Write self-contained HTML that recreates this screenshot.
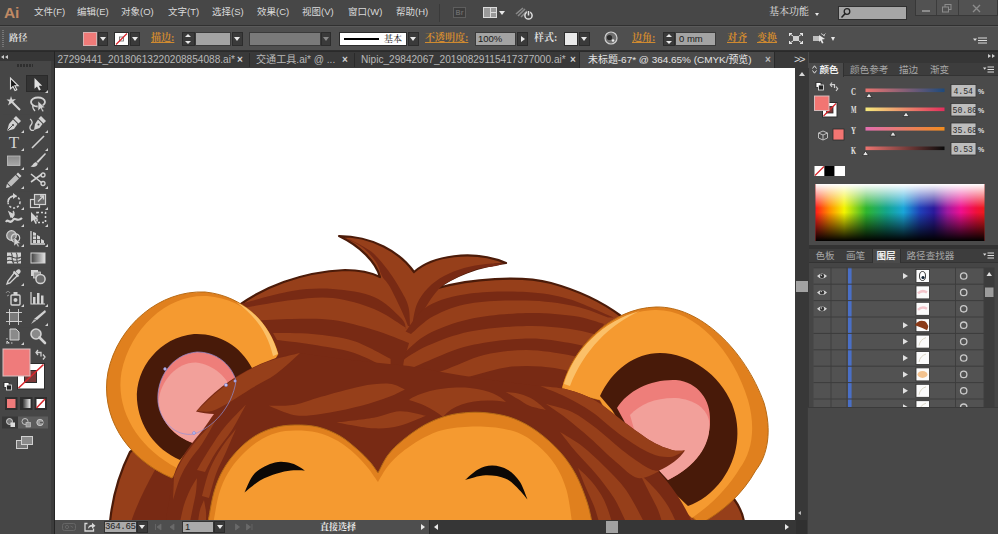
<!DOCTYPE html>
<html lang="zh-CN">
<head>
<meta charset="utf-8">
<title>Ai</title>
<style>
*{box-sizing:border-box;margin:0;padding:0}
html,body{width:998px;height:534px;overflow:hidden;background:#4a4a4a}
body{position:relative;font-family:"Liberation Sans","Noto Sans CJK SC",sans-serif;font-size:10px;color:#e0e0e0}
.abs,.t,.b{position:absolute}
.t{white-space:nowrap;line-height:12px;height:12px}
.m{font-size:9.5px;color:#dadada}
.tb{font-size:10.1px;color:#b8b8b8}
.pt{font-size:9.6px;color:#a6a6a6}
.tx{font-size:10px;color:#d0d0d0;font-weight:700}
.serif{font-family:"Liberation Serif","Noto Serif CJK SC",serif;font-weight:700}
.or{color:#cf8a30;text-decoration:underline}
#menubar{left:0;top:0;width:998px;height:26px;background:#474747;border-bottom:1px solid #303030}
#ctrlbar{left:0;top:26px;width:998px;height:25px;background:#4f4f4f;border-top:1px solid #5a5a5a;border-bottom:1px solid #2e2e2e}
#tabbar{left:55px;top:51px;width:753px;height:17px;background:#393939}
#toolbox{left:0;top:51px;width:54px;height:483px;background:#464646;border-right:3px solid #3c3c3c}
#tbgap{left:53.5px;top:51px;width:1.5px;height:483px;background:#242424}
#canvas{left:55px;top:68px;width:740px;height:452px;background:#fff;overflow:hidden}
#vscroll{left:795px;top:68px;width:14px;height:452px;background:#383838}
#status{left:55px;top:520px;width:754px;height:14px;background:#4e4e4e}
#right{left:809px;top:51px;width:189px;height:483px;background:#4a4a4a}
.dd{background:#3a3a3a;border:1px solid #2c2c2c}
.inp{background:#a3a3a3;border:1px solid #3a3a3a;color:#1a1a1a}
.tri-d{width:0;height:0;border-left:3px solid transparent;border-right:3px solid transparent;border-top:4px solid #e8e8e8}
.tri-u{width:0;height:0;border-left:3px solid transparent;border-right:3px solid transparent;border-bottom:4px solid #e8e8e8}
.tri-r{width:0;height:0;border-top:3px solid transparent;border-bottom:3px solid transparent;border-left:4px solid #e8e8e8}
.tri-l{width:0;height:0;border-top:3px solid transparent;border-bottom:3px solid transparent;border-right:4px solid #e8e8e8}
</style>
</head>
<body>
<!-- ===== MENU BAR ===== -->
<div id="menubar" class="abs">
  <div class="t" id="ai" style="left:4px;top:3.5px;font-size:15.5px;line-height:18px;height:18px;font-weight:700;color:#c08a64;letter-spacing:-0.3px">Ai</div>
  <div class="t m" style="left:34px;top:6px">文件(F)</div>
  <div class="t m" style="left:77px;top:6px">编辑(E)</div>
  <div class="t m" style="left:121px;top:6px">对象(O)</div>
  <div class="t m" style="left:168px;top:6px">文字(T)</div>
  <div class="t m" style="left:212px;top:6px">选择(S)</div>
  <div class="t m" style="left:257px;top:6px">效果(C)</div>
  <div class="t m" style="left:302px;top:6px">视图(V)</div>
  <div class="t m" style="left:348px;top:6px">窗口(W)</div>
  <div class="t m" style="left:396px;top:6px">帮助(H)</div>
  <div class="b" style="left:439px;top:4px;width:1px;height:18px;background:#3a3a3a"></div>
  <div class="b" style="left:453px;top:7px;width:13px;height:11px;background:#3c3c3c;border:1px solid #5e5e5e;color:#6a6a6a;font-size:7px;line-height:9px;text-align:center;font-weight:700">Br</div>
  <svg class="abs" style="left:483px;top:7px" width="14" height="11" viewBox="0 0 14 11"><rect x="0" y="0" width="14" height="11" fill="#dcdcdc"/><rect x="1" y="1" width="6" height="9" fill="#9a9a9a"/><rect x="8" y="1" width="5" height="4" fill="#9a9a9a"/><rect x="8" y="6" width="5" height="4" fill="#9a9a9a"/></svg>
  <div class="b tri-d" style="left:499px;top:11px"></div>
  <svg class="abs" style="left:515px;top:6px" width="20" height="15" viewBox="0 0 20 15"><path d="M1 8 L8 2 M3 10 L10 3 M6 11 L12 5" stroke="#8a8a8a" stroke-width="1.6" fill="none"/><circle cx="13.5" cy="9.5" r="3.6" fill="none" stroke="#e0e0e0" stroke-width="1.5"/><path d="M13.5 4.5 V9" stroke="#474747" stroke-width="3.2"/><path d="M13.5 5 V9.5" stroke="#e0e0e0" stroke-width="1.5"/></svg>
  <div class="t serif" style="left:769px;top:6px;font-weight:400;color:#e6e6e6">基本功能</div>
  <div class="b tri-d" style="left:815px;top:13px;border-left-width:2.5px;border-right-width:2.5px;border-top-width:3px"></div>
  <div class="b" style="left:838px;top:6px;width:69px;height:14px;background:#a6a6a6;border:1px solid #303030"></div>
  <svg class="abs" style="left:840px;top:7px" width="12" height="12" viewBox="0 0 12 12"><circle cx="7" cy="4.5" r="2.8" fill="none" stroke="#222" stroke-width="1.3"/><path d="M5 6.8 L1.5 10.5" stroke="#222" stroke-width="1.6"/></svg>
  <div class="b" style="left:915px;top:0;width:83px;height:16px;background:#525252;border:1px solid #383838;border-top:none"></div>
  <div class="b" style="left:936px;top:0;width:1px;height:15px;background:#3c3c3c"></div>
  <div class="b" style="left:958px;top:0;width:1px;height:15px;background:#3c3c3c"></div>
  <div class="b" style="left:922px;top:10px;width:8px;height:2px;background:#8c8c8c"></div>
  <svg class="abs" style="left:942px;top:4px" width="10" height="9" viewBox="0 0 10 9"><rect x="3" y="0.5" width="6" height="5" fill="none" stroke="#8c8c8c"/><rect x="0.5" y="3" width="6" height="5" fill="#525252" stroke="#8c8c8c"/></svg>
  <svg class="abs" style="left:972px;top:4px" width="9" height="9" viewBox="0 0 9 9"><path d="M1 1 L8 8 M8 1 L1 8" stroke="#8c8c8c" stroke-width="1.4"/></svg>
</div>
<!-- ===== CONTROL BAR ===== -->
<div id="ctrlbar" class="abs"></div>
<div class="b" style="left:2px;top:30px;width:2px;height:17px;background:repeating-linear-gradient(#777 0 1px,transparent 1px 2px)"></div>
<div class="t serif" style="left:9px;top:32px;color:#dcdcdc;font-size:9.2px">路径</div>
<div class="b" style="left:83px;top:32px;width:14px;height:14px;background:#f07a78;border:1px solid #d8b0b0"></div>
<div class="b dd" style="left:98px;top:32px;width:10px;height:14px"></div><div class="b tri-d" style="left:100px;top:37px"></div>
<svg class="abs" style="left:114px;top:32px" width="15" height="14" viewBox="0 0 15 14"><rect x="0.5" y="0.5" width="14" height="13" fill="#fff" stroke="#2c2c2c"/><rect x="5.5" y="5" width="4" height="4" fill="none" stroke="#666" stroke-width="0.8"/><path d="M2 12.5 L13 1.5" stroke="#d8262c" stroke-width="1.3"/></svg>
<div class="b dd" style="left:130px;top:32px;width:10px;height:14px"></div><div class="b tri-d" style="left:132px;top:37px"></div>
<div class="t serif or" style="left:151px;top:32px">描边:</div>
<div class="b dd" style="left:182px;top:32px;width:13px;height:14px"></div><div class="b tri-u" style="left:185px;top:34px;border-bottom-width:3px"></div><div class="b tri-d" style="left:185px;top:41px;border-top-width:3px"></div>
<div class="b inp" style="left:195px;top:32px;width:36px;height:14px"></div>
<div class="b dd" style="left:232px;top:32px;width:11px;height:14px"></div><div class="b tri-d" style="left:234px;top:37px"></div>
<div class="b" style="left:249px;top:32px;width:72px;height:14px;background:#7a7a7a;border:1px solid #3a3a3a"></div>
<div class="b dd" style="left:321px;top:32px;width:10px;height:14px"></div><div class="b tri-d" style="left:323px;top:37px;border-top-color:#888"></div>
<div class="b" style="left:339px;top:32px;width:68px;height:14px;background:#fff;border:1px solid #2c2c2c"></div>
<div class="b" style="left:344px;top:38px;width:35px;height:2px;background:#000"></div>
<div class="t serif" style="left:384px;top:33px;color:#111;font-size:9px;font-weight:400">基本</div>
<div class="b dd" style="left:408px;top:32px;width:11px;height:14px"></div><div class="b tri-d" style="left:410px;top:37px"></div>
<div class="t serif or" style="left:425px;top:32px">不透明度:</div>
<div class="b inp" style="left:475px;top:32px;width:41px;height:14px"></div>
<div class="t" style="left:478px;top:33px;color:#1a1a1a;font-size:9.5px">100%</div>
<div class="b dd" style="left:517px;top:32px;width:11px;height:14px"></div><div class="b tri-r" style="left:521px;top:36px"></div>
<div class="t serif" style="left:534px;top:32px;color:#dcdcdc">样式:</div>
<div class="b" style="left:564px;top:32px;width:14px;height:14px;background:#e9e9e9;border:1px solid #2c2c2c"></div>
<div class="b dd" style="left:579px;top:32px;width:11px;height:14px"></div><div class="b tri-d" style="left:581px;top:37px"></div>
<svg class="abs" style="left:604px;top:31px" width="14" height="14" viewBox="0 0 14 14"><circle cx="7" cy="7" r="6" fill="#6e6e6e" stroke="#d0d0d0" stroke-width="1.2"/><circle cx="5.5" cy="6.5" r="2.6" fill="#2a2a2a"/><circle cx="9" cy="9.5" r="1.3" fill="#e8e8e8"/></svg>
<div class="t serif or" style="left:632px;top:32px">边角:</div>
<div class="b dd" style="left:663px;top:32px;width:12px;height:14px"></div><div class="b tri-u" style="left:666px;top:34px;border-bottom-width:3px"></div><div class="b tri-d" style="left:666px;top:41px;border-top-width:3px"></div>
<div class="b inp" style="left:675px;top:32px;width:41px;height:14px"></div>
<div class="t" style="left:679px;top:33px;color:#1a1a1a;font-size:9.5px">0 mm</div>
<div class="t serif or" style="left:727px;top:32px">对齐</div>
<div class="t serif or" style="left:757px;top:32px">变换</div>
<svg class="abs" style="left:789px;top:33px" width="14" height="11" viewBox="0 0 14 11"><rect x="4" y="3" width="6" height="5" fill="#cfcfcf"/><path d="M0.5 3 V0.5 H3 M11 0.5 H13.5 V3 M13.5 8 V10.5 H11 M3 10.5 H0.5 V8" stroke="#e6e6e6" fill="none" stroke-width="1.2"/><path d="M1 1 L4 3 M13 1 L10 3 M13 10 L10 8 M1 10 L4 8" stroke="#e6e6e6" stroke-width="1"/></svg>
<svg class="abs" style="left:812px;top:33px" width="15" height="12" viewBox="0 0 15 12"><rect x="1" y="3" width="6" height="5" fill="#bdbdbd"/><path d="M7 2 L13 6 L10 6.5 L11.5 10 L10 10.5 L8.5 7.5 L7 9 Z" fill="#e6e6e6"/><path d="M9 0.5 L13 3 M13.5 0.5 L11 3" stroke="#bbb" stroke-width="1"/></svg>
<div class="b tri-d" style="left:831px;top:37px;border-left-width:2.5px;border-right-width:2.5px"></div>
<svg class="abs" style="left:973px;top:37px" width="14" height="7" viewBox="0 0 14 7"><path d="M0 1.5 L4 1.5 L2 4 Z" fill="#ddd"/><path d="M5 1 H14 M5 3.5 H14 M5 6 H14" stroke="#ddd" stroke-width="1"/></svg>

<div id="tabbar" class="abs"></div>
<div class="b" style="left:55px;top:51px;width:754px;height:1px;background:#2a2a2a"></div>
<div class="t tb" style="left:57.5px;top:54px">27299441_20180613220208854088.ai*</div>
<div class="t tx" style="left:237px;top:54px">×</div>
<div class="b" style="left:249px;top:53px;width:1px;height:14px;background:#2a2a2a"></div>
<div class="t tb" style="left:256px;top:54px">交通工具.ai* @ ...</div>
<div class="t tx" style="left:342px;top:54px">×</div>
<div class="b" style="left:354px;top:53px;width:1px;height:14px;background:#2a2a2a"></div>
<div class="t tb" style="left:361px;top:54px">Nipic_29842067_20190829115417377000.ai*</div>
<div class="t tx" style="left:570px;top:54px">×</div>
<div class="b" style="left:579px;top:52px;width:196px;height:16px;background:#4a4a4a;border-left:1px solid #2a2a2a;border-right:1px solid #2a2a2a"></div>
<div class="t tb" style="left:588px;top:54px;color:#e4e4e4;font-size:9.95px">未标题-67* @ 364.65% (CMYK/预览)</div>
<div class="t tx" style="left:765px;top:54px;color:#bbb">×</div>
<div class="t" style="left:794px;top:52.5px;font-size:11px;color:#d8d8d8;letter-spacing:-1.5px">&gt;&gt;</div>
<!--TB-START-->
<div id="toolbox" class="abs"></div>
<div class="b" style="left:0;top:51px;width:54px;height:10px;background:#363636;border-top:1px solid #2a2a2a"></div>
<div class="b tri-l" style="left:1px;top:55px;border-top-width:2.5px;border-bottom-width:2.5px;border-right-width:3px;border-right-color:#ccc"></div><div class="b tri-l" style="left:5px;top:55px;border-top-width:2.5px;border-bottom-width:2.5px;border-right-width:3px;border-right-color:#ccc"></div>
<div class="b" style="left:17px;top:64px;width:16px;height:3px;background:repeating-linear-gradient(90deg,#2e2e2e 0 2px,transparent 2px 3px)"></div>
<div class="b" style="left:26px;top:75px;width:22px;height:17px;background:#333;border:1px solid #2a2a2a"></div>
<svg class="abs" style="left:5px;top:75px" width="18" height="18" viewBox="0 0 18 18"><path d="M5.5 3 L5.5 13.8 L8 11.5 L10 15.6 L11.8 14.7 L9.8 10.8 L13.2 10.8 Z" fill="#1a1a1a" stroke="#e0e0e0" stroke-width="1.1"/></svg>
<svg class="abs" style="left:29px;top:75px" width="18" height="18" viewBox="0 0 18 18"><path d="M5.5 3 L5.5 13.8 L8 11.5 L10 15.6 L11.8 14.7 L9.8 10.8 L13.2 10.8 Z" fill="#e0e0e0"/></svg>
<svg class="abs" style="left:45px;top:90px" width="3" height="3" viewBox="0 0 3 3"><path d="M3 0 V3 H0 Z" fill="#d0d0d0"/></svg>
<svg class="abs" style="left:5px;top:94.5px" width="18" height="18" viewBox="0 0 18 18"><path d="M6 1 L7.2 4.5 L11 4 L8.3 6.5 L10 10 L6.5 8 L3 10.5 L4.3 6.8 L1.5 4.5 L5 4.6 Z" fill="#d2d2d2"/><path d="M8 8 L15 15" stroke="#d2d2d2" stroke-width="2"/></svg>
<svg class="abs" style="left:29px;top:94.5px" width="18" height="18" viewBox="0 0 18 18"><ellipse cx="9" cy="7" rx="7" ry="4.5" fill="none" stroke="#d2d2d2" stroke-width="1.8"/><path d="M4 10 C3 13,5 15,6 16" stroke="#d2d2d2" stroke-width="1.3" fill="none"/><path d="M9 6 L9 16 L11.5 13.5 L13.5 17 L15 16 L13 13 L16 12.5 Z" fill="#d2d2d2" stroke="#494949" stroke-width="0.6"/></svg>
<svg class="abs" style="left:5px;top:115px" width="18" height="18" viewBox="0 0 18 18"><path d="M11 1 L16 6 L13.5 8.5 L8.5 3.5 Z" fill="#d2d2d2"/><path d="M8 4.5 L12.5 9 L9 14 L2 16 L4 9 Z" fill="#d2d2d2"/><path d="M2.5 15.5 L7.5 10.5" stroke="#494949" stroke-width="1"/><circle cx="8" cy="10" r="1.1" fill="#494949"/></svg>
<svg class="abs" style="left:21px;top:130px" width="3" height="3" viewBox="0 0 3 3"><path d="M3 0 V3 H0 Z" fill="#d0d0d0"/></svg>
<svg class="abs" style="left:29px;top:115px" width="18" height="18" viewBox="0 0 18 18"><path d="M12 1 L17 6 L14.5 8.5 L9.5 3.5 Z" fill="#d2d2d2"/><path d="M9 4.5 L13.5 9 L10.5 13 L5 15 L6 9 Z" fill="#d2d2d2"/><path d="M5 15 C1 17,0 12,2 10 C4 8,3 5,1 4" stroke="#d2d2d2" stroke-width="1.3" fill="none"/><circle cx="9.5" cy="9.5" r="1" fill="#494949"/></svg>
<svg class="abs" style="left:45px;top:130px" width="3" height="3" viewBox="0 0 3 3"><path d="M3 0 V3 H0 Z" fill="#d0d0d0"/></svg>
<svg class="abs" style="left:5px;top:133px" width="18" height="18" viewBox="0 0 18 18"><text x="9" y="15" font-family="Liberation Serif,serif" font-size="17" text-anchor="middle" fill="#d2d2d2">T</text></svg>
<svg class="abs" style="left:21px;top:148px" width="3" height="3" viewBox="0 0 3 3"><path d="M3 0 V3 H0 Z" fill="#d0d0d0"/></svg>
<svg class="abs" style="left:29px;top:133px" width="18" height="18" viewBox="0 0 18 18"><path d="M3 15 L15 3" stroke="#d2d2d2" stroke-width="1.6"/></svg>
<svg class="abs" style="left:45px;top:148px" width="3" height="3" viewBox="0 0 3 3"><path d="M3 0 V3 H0 Z" fill="#d0d0d0"/></svg>
<svg class="abs" style="left:5px;top:152px" width="18" height="18" viewBox="0 0 18 18"><defs><linearGradient id="gr1" x1="0" y1="0" x2="0" y2="1"><stop offset="0" stop-color="#8a8a8a"/><stop offset="1" stop-color="#a8a8a8"/></linearGradient></defs><rect x="2.5" y="4" width="12.5" height="9.5" fill="url(#gr1)" stroke="#c4c4c4" stroke-width="0.8"/></svg>
<svg class="abs" style="left:21px;top:167px" width="3" height="3" viewBox="0 0 3 3"><path d="M3 0 V3 H0 Z" fill="#d0d0d0"/></svg>
<svg class="abs" style="left:29px;top:152px" width="18" height="18" viewBox="0 0 18 18"><path d="M16 1 L17 2 L9 11 L7.5 9.5 Z" fill="#d2d2d2"/><path d="M7 10 L8.8 11.8 C8 15,4 15.5,1.5 14.5 C4 13.5,4 11,7 10 Z" fill="#d2d2d2"/></svg>
<svg class="abs" style="left:45px;top:167px" width="3" height="3" viewBox="0 0 3 3"><path d="M3 0 V3 H0 Z" fill="#d0d0d0"/></svg>
<svg class="abs" style="left:5px;top:171px" width="18" height="18" viewBox="0 0 18 18"><path d="M13 1.5 L16.5 5 L14.8 6.7 L11.3 3.2 Z" fill="#d2d2d2"/><path d="M10.5 4 L14 7.5 L6 15.5 L2.5 12 Z" fill="#bdbdbd"/><path d="M2 12.8 L5.2 16 L1 17 Z" fill="#d2d2d2"/></svg>
<svg class="abs" style="left:21px;top:186px" width="3" height="3" viewBox="0 0 3 3"><path d="M3 0 V3 H0 Z" fill="#d0d0d0"/></svg>
<svg class="abs" style="left:29px;top:171px" width="18" height="18" viewBox="0 0 18 18"><path d="M2 3 L13 12 M2 11 L13 3" stroke="#d2d2d2" stroke-width="1.6"/><circle cx="14" cy="4" r="2" fill="none" stroke="#d2d2d2" stroke-width="1.3"/><circle cx="14" cy="12.5" r="2" fill="none" stroke="#d2d2d2" stroke-width="1.3"/></svg>
<svg class="abs" style="left:45px;top:186px" width="3" height="3" viewBox="0 0 3 3"><path d="M3 0 V3 H0 Z" fill="#d0d0d0"/></svg>
<svg class="abs" style="left:5px;top:192px" width="18" height="18" viewBox="0 0 18 18"><circle cx="9" cy="10" r="6" fill="none" stroke="#d2d2d2" stroke-width="1.5" stroke-dasharray="2.2 1.8"/><path d="M3 10 A6 6 0 0 1 9 4" fill="none" stroke="#d2d2d2" stroke-width="1.7"/><path d="M8 1 L12 4 L8 7 Z" fill="#d2d2d2"/></svg>
<svg class="abs" style="left:21px;top:207px" width="3" height="3" viewBox="0 0 3 3"><path d="M3 0 V3 H0 Z" fill="#d0d0d0"/></svg>
<svg class="abs" style="left:29px;top:192px" width="18" height="18" viewBox="0 0 18 18"><rect x="1.5" y="7.5" width="9" height="8" fill="none" stroke="#d2d2d2" stroke-width="1.2"/><rect x="5.5" y="2.5" width="11" height="10" fill="#6a6a6a" stroke="#d2d2d2" stroke-width="1.2"/><path d="M9 9.5 L14 4.5 M11 4 H14.5 V7.5" stroke="#d2d2d2" stroke-width="1.3" fill="none"/></svg>
<svg class="abs" style="left:45px;top:207px" width="3" height="3" viewBox="0 0 3 3"><path d="M3 0 V3 H0 Z" fill="#d0d0d0"/></svg>
<svg class="abs" style="left:5px;top:209px" width="18" height="18" viewBox="0 0 18 18"><path d="M1 13 C3 9,5 16,8 11 C10 7,12 14,17 9" stroke="#d2d2d2" stroke-width="2.2" fill="none"/><path d="M4 3 L9 6 L6 8 Z M8 2 C10 4,9 7,7 9" fill="#d2d2d2" stroke="#d2d2d2" stroke-width="1.2"/></svg>
<svg class="abs" style="left:21px;top:224px" width="3" height="3" viewBox="0 0 3 3"><path d="M3 0 V3 H0 Z" fill="#d0d0d0"/></svg>
<svg class="abs" style="left:29px;top:209px" width="18" height="18" viewBox="0 0 18 18"><path d="M2 3 L2 13 L4.5 11 L6.5 15 L8 14.3 L6 10.5 L9.5 10.5 Z" fill="#d2d2d2"/><rect x="8" y="3.5" width="8.5" height="10" fill="none" stroke="#d2d2d2" stroke-width="1.6" stroke-dasharray="2 2"/></svg>
<svg class="abs" style="left:45px;top:224px" width="3" height="3" viewBox="0 0 3 3"><path d="M3 0 V3 H0 Z" fill="#d0d0d0"/></svg>
<svg class="abs" style="left:5px;top:229px" width="18" height="18" viewBox="0 0 18 18"><circle cx="6.5" cy="6.5" r="4.8" fill="#8a8a8a" stroke="#d2d2d2" stroke-width="1.2"/><circle cx="10.5" cy="9" r="4.2" fill="none" stroke="#d2d2d2" stroke-width="1.2"/><path d="M9 8 L9 17 L11.3 15 L13 18 L14.3 17.3 L12.7 14.5 L15.5 14.2 Z" fill="#d2d2d2" stroke="#494949" stroke-width="0.5"/></svg>
<svg class="abs" style="left:21px;top:244px" width="3" height="3" viewBox="0 0 3 3"><path d="M3 0 V3 H0 Z" fill="#d0d0d0"/></svg>
<svg class="abs" style="left:29px;top:229px" width="18" height="18" viewBox="0 0 18 18"><path d="M2 2 V15 H16" stroke="#d2d2d2" stroke-width="1.3" fill="none"/><path d="M4 3 L7 4 V14 H4 Z M8 6 L11 7.5 V14 H8 Z M12 10 L15 11.5 V14 H12 Z" fill="#d2d2d2"/><path d="M4 7 H7 M4 10.5 H7 M8 10.5 H11" stroke="#494949" stroke-width="0.8"/></svg>
<svg class="abs" style="left:45px;top:244px" width="3" height="3" viewBox="0 0 3 3"><path d="M3 0 V3 H0 Z" fill="#d0d0d0"/></svg>
<svg class="abs" style="left:5px;top:248.5px" width="18" height="18" viewBox="0 0 18 18"><rect x="2" y="3.5" width="14" height="11" fill="#d2d2d2"/><path d="M2 8 C6 5,10 12,16 8 M6 3.5 C9 7,5 11,9 14.5 M11 3.5 C14 7,10 11,13 14.5 M2 12 C6 9,10 15,16 11" stroke="#494949" stroke-width="1.1" fill="none"/></svg>
<svg class="abs" style="left:29px;top:248.5px" width="18" height="18" viewBox="0 0 18 18"><defs><linearGradient id="gr2" x1="0" y1="0" x2="1" y2="0"><stop offset="0" stop-color="#3e3e3e"/><stop offset="1" stop-color="#e4e4e4"/></linearGradient></defs><rect x="2" y="4" width="14" height="10" fill="url(#gr2)" stroke="#d2d2d2" stroke-width="1"/></svg>
<svg class="abs" style="left:5px;top:268px" width="18" height="18" viewBox="0 0 18 18"><path d="M12 2 C14 0,17 3,15 5 L13.5 6.5 L10.5 3.5 Z" fill="#d2d2d2"/><path d="M9.5 4.5 L12.5 7.5 L5 15 L2 16 L3 13 Z" fill="none" stroke="#d2d2d2" stroke-width="1.4"/><path d="M8.5 3.5 L13.5 8.5" stroke="#d2d2d2" stroke-width="1.8"/></svg>
<svg class="abs" style="left:21px;top:283px" width="3" height="3" viewBox="0 0 3 3"><path d="M3 0 V3 H0 Z" fill="#d0d0d0"/></svg>
<svg class="abs" style="left:29px;top:268px" width="18" height="18" viewBox="0 0 18 18"><rect x="2" y="2" width="7" height="6" fill="#d2d2d2"/><rect x="4.5" y="4" width="7" height="6" fill="#9a9a9a" stroke="#d2d2d2" stroke-width="0.8"/><circle cx="11.5" cy="11" r="4.6" fill="#6a6a6a" stroke="#d2d2d2" stroke-width="1.5"/></svg>
<svg class="abs" style="left:5px;top:289px" width="18" height="18" viewBox="0 0 18 18"><rect x="6" y="6" width="9" height="10" rx="1" fill="none" stroke="#d2d2d2" stroke-width="1.4"/><rect x="8.5" y="3" width="4" height="3" fill="#d2d2d2"/><circle cx="10.5" cy="11" r="2" fill="#d2d2d2"/><path d="M1 4 C2 2,4 2,5 4 M2 7 L4 6" stroke="#9a9a9a" stroke-width="1" fill="none"/></svg>
<svg class="abs" style="left:21px;top:304px" width="3" height="3" viewBox="0 0 3 3"><path d="M3 0 V3 H0 Z" fill="#d0d0d0"/></svg>
<svg class="abs" style="left:29px;top:289px" width="18" height="18" viewBox="0 0 18 18"><path d="M2 3 V15 H16" stroke="#d2d2d2" stroke-width="1.2" fill="none"/><rect x="4" y="8" width="2.5" height="7" fill="#d2d2d2"/><rect x="8" y="4" width="2.5" height="11" fill="#d2d2d2"/><rect x="12" y="6.5" width="2.5" height="8.5" fill="#d2d2d2"/></svg>
<svg class="abs" style="left:45px;top:304px" width="3" height="3" viewBox="0 0 3 3"><path d="M3 0 V3 H0 Z" fill="#d0d0d0"/></svg>
<svg class="abs" style="left:5px;top:308px" width="18" height="18" viewBox="0 0 18 18"><rect x="4.5" y="4.5" width="9" height="9" fill="#7a7a7a" stroke="#d2d2d2" stroke-width="1"/><path d="M4.5 1 V17 M13.5 1 V17 M1 4.5 H17 M1 13.5 H17" stroke="#d2d2d2" stroke-width="0.9"/></svg>
<svg class="abs" style="left:29px;top:308px" width="18" height="18" viewBox="0 0 18 18"><path d="M16 2 L17 4 L8 12 L5 11 Z" fill="#d2d2d2"/><path d="M5 11.5 L7.5 12.5 L2 16 Z" fill="#bdbdbd"/></svg>
<svg class="abs" style="left:45px;top:323px" width="3" height="3" viewBox="0 0 3 3"><path d="M3 0 V3 H0 Z" fill="#d0d0d0"/></svg>
<svg class="abs" style="left:5px;top:327px" width="18" height="18" viewBox="0 0 18 18"><path d="M5 2 H11 L14 5 V13 H5 Z" fill="#8a8a8a" stroke="#d2d2d2" stroke-width="1"/><path d="M2 11 V16 H9" stroke="#d2d2d2" stroke-width="1" stroke-dasharray="1.5 1.5" fill="none"/><path d="M2 14 L4 16 M1 16 H3" stroke="#d2d2d2" stroke-width="1"/></svg>
<svg class="abs" style="left:21px;top:342px" width="3" height="3" viewBox="0 0 3 3"><path d="M3 0 V3 H0 Z" fill="#d0d0d0"/></svg>
<svg class="abs" style="left:29px;top:327px" width="18" height="18" viewBox="0 0 18 18"><circle cx="7" cy="7" r="5" fill="#8a8a8a" stroke="#d2d2d2" stroke-width="1.6"/><path d="M10.5 10.5 L16 16" stroke="#d2d2d2" stroke-width="2.6" stroke-linecap="round"/></svg>
<div class="b" style="left:3px;top:113.5px;width:48px;height:1px;background:#454545"></div>
<div class="b" style="left:3px;top:190.5px;width:48px;height:1px;background:#454545"></div>
<div class="b" style="left:3px;top:228px;width:48px;height:1px;background:#454545"></div>
<div class="b" style="left:3px;top:267px;width:48px;height:1px;background:#454545"></div>
<div class="b" style="left:3px;top:287px;width:48px;height:1px;background:#454545"></div>
<div class="b" style="left:3px;top:326.5px;width:48px;height:1px;background:#454545"></div>
<svg class="abs" style="left:0;top:345px" width="54" height="110" viewBox="0 345 54 110">
<rect x="17.5" y="363.5" width="27" height="25.5" fill="#fff" stroke="#2c2c2c"/>
<rect x="24.5" y="370.5" width="12" height="12" fill="#7a3838" stroke="#2c2c2c"/>
<path d="M18.5 388 L43.5 364.5" stroke="#d8262c" stroke-width="1.6"/>
<rect x="3" y="349" width="27" height="27" fill="#ef7b7b" stroke="#d9c2c2" stroke-width="1"/>
<path d="M38 350 L36 352.5 L38 355 M36.3 352.5 H41 V356.5 M43 359.5 L45 357 L43 354.5" stroke="#cfcfcf" stroke-width="1.3" fill="none"/>
<rect x="4" y="382.5" width="5" height="5" fill="#fff" stroke="#222" stroke-width="0.8"/><rect x="6.5" y="385" width="5" height="5" fill="#222" stroke="#eee" stroke-width="0.8"/>
<rect x="5" y="397" width="12.5" height="13" fill="#2e2e2e"/><rect x="7" y="399" width="8.5" height="9" fill="#ef7b7b"/>
<defs><linearGradient id="gr3" x1="0" y1="0" x2="1" y2="0"><stop offset="0" stop-color="#222"/><stop offset="1" stop-color="#f4f4f4"/></linearGradient></defs>
<rect x="20" y="397" width="12.5" height="13" fill="#2e2e2e"/><rect x="22" y="399" width="8.5" height="9" fill="url(#gr3)"/>
<rect x="34.5" y="397" width="12.5" height="13" fill="#2e2e2e"/><rect x="36.5" y="399" width="8.5" height="9" fill="#fff"/><path d="M36.5 408 L45 399" stroke="#d8262c" stroke-width="1.5"/>
<rect x="2" y="416.5" width="16" height="12" fill="#383838"/><rect x="18" y="416.5" width="30" height="12" fill="#5c5c5c"/>
<circle cx="9.5" cy="421.5" r="3" fill="#777" stroke="#ddd" stroke-width="0.9"/><rect x="10.5" y="422.5" width="4.5" height="4.5" fill="#ddd"/>
<circle cx="25" cy="421.5" r="3" fill="none" stroke="#ccc" stroke-width="0.9"/><rect x="26" y="422.5" width="4.5" height="4.5" fill="#999" stroke="#ccc" stroke-width="0.6"/>
<circle cx="40" cy="422.5" r="3.2" fill="#999" stroke="#ccc" stroke-width="0.9"/><path d="M40 422.5 h3.2" stroke="#5c5c5c" stroke-width="1.5"/>
<rect x="16.5" y="440.5" width="11" height="8" fill="#777" stroke="#d0d0d0"/><rect x="21.5" y="436.5" width="11" height="8" fill="#8a8a8a" stroke="#d0d0d0"/>
</svg>
<!--TB-END-->
<div id="tbgap" class="abs"></div>
<div id="canvas" class="abs"></div>
<!--L-START-->
<svg class="abs" style="left:55px;top:68px" width="740" height="452" viewBox="55 68 740 452">
<defs><clipPath id="cv"><rect x="55" y="68" width="740" height="452"/></clipPath></defs>
<g clip-path="url(#cv)" stroke-linejoin="round">
<path d="M110 522 C112.5 497,120 472,130 452 L200 400 L238 306 C262 288,300 272,345 270 C360 270,372 273,380 277 C376 262,360 246,339 236 C372 236,400 252,414 272 C432 256,472 249,506 263 C478 266,452 277,438 288 C470 279,520 275,551 283 C580 291,605 304,621 316 L700 400 L734 499 C739 506,743 514,744 522 Z" fill="#963f1a" stroke="#4b1b09" stroke-width="2.2"/>
<g fill="#782a14">
<path d="M240 304C248.7 301.8,276.5 293.5,292.0 291.0C307.5 288.5,319.3 288.0,333.0 289.0C346.7 290.0,362.7 292.2,374.0 297.0C385.3 301.8,395.7 312.7,401.0 318.0C406.3 323.3,405.2 327.2,406.0 329.0L406 329C405.5 328.5,408.3 329.3,403.0 326.0C397.7 322.7,385.7 313.7,374.0 309.0C362.3 304.3,346.7 299.5,333.0 298.0C319.3 296.5,306.5 298.4,292.0 300.0C277.5 301.6,253.7 306.2,246.0 307.5Z"/>
<path d="M343 237.5C346.2 239.1,356.5 242.9,362.0 247.0C367.5 251.1,372.7 257.2,376.0 262.0C379.3 266.8,379.7 271.8,382.0 276.0C384.3 280.2,386.7 281.1,390.0 287.0C393.3 292.9,399.0 305.0,402.0 311.5C405.0 318.0,407.0 323.6,408.0 326.0L410 326C409.8 322.9,409.9 312.9,408.6 307.4C407.3 301.9,405.8 299.2,402.4 293.0C399.0 286.8,393.1 277.2,388.0 270.3C382.9 263.4,377.7 256.9,371.5 251.8C365.3 246.8,354.4 242.0,351.0 240.0Z"/>
<path d="M412 326C412.8 322.3,414.3 310.3,417.0 304.0C419.7 297.7,423.5 292.7,428.0 288.0C432.5 283.3,438.0 279.3,444.0 276.0C450.0 272.7,457.0 270.0,464.0 268.0C471.0 266.0,479.3 264.8,486.0 264.0C492.7 263.2,501.0 263.2,504.0 263.0L504 263C502.7 263.5,500.7 264.9,496.0 266.0C491.3 267.1,483.3 267.2,476.0 269.5C468.7 271.8,458.3 276.6,452.0 280.0C445.7 283.4,442.7 285.0,438.0 290.0C433.3 295.0,428.0 303.3,424.0 310.0C420.0 316.7,415.7 326.7,414.0 330.0Z"/>
<path d="M405.6 331.5C409.3 327.2,417.3 312.3,428.0 306.0C438.7 299.7,453.6 295.9,470.0 293.6C486.4 291.3,510.1 291.1,526.5 292.0C542.9 292.9,554.1 294.8,568.6 299.0C583.1 303.2,606.1 314.4,613.6 317.5L608 317.5C602.3 315.6,587.6 308.8,574.0 306.0C560.4 303.2,543.8 301.0,526.5 300.6C509.2 300.2,485.5 300.8,470.0 303.4C454.5 306.0,443.5 310.9,433.7 316.0C423.9 321.1,414.8 331.0,411.0 334.0Z"/>
<path d="M403 354C407.2 350.7,416.8 339.8,428.0 334.0C439.2 328.2,453.6 322.5,470.0 319.0C486.4 315.5,509.2 313.5,526.5 313.0C543.8 312.5,561.1 314.2,574.0 316.0C586.9 317.8,599.0 322.7,604.0 324.0L598 335C593.1 333.9,580.5 330.2,568.6 328.7C556.7 327.2,542.9 325.5,526.5 326.0C510.1 326.5,486.4 328.2,470.0 331.5C453.6 334.8,439.7 340.5,428.0 345.6C416.3 350.7,404.7 359.3,400.0 362.0Z"/>
<path d="M400 373.7C404.7 371.6,416.3 365.7,428.0 361.0C439.7 356.3,453.6 349.4,470.0 345.6C486.4 341.9,510.1 339.0,526.5 338.5C542.9 338.0,557.7 341.1,568.6 342.7C579.5 344.3,588.1 347.1,592.0 348.0L586 360C583.1 359.2,578.5 356.7,568.6 355.0C558.7 353.3,540.6 350.0,526.5 350.0C512.4 350.0,498.1 351.5,484.0 355.0C469.9 358.5,455.1 366.5,442.0 371.0C428.9 375.5,411.7 380.2,405.6 382.0Z"/>
</g>
<path d="M156 468 C146 486,137 504,131 522 L170 522 L180 460 Z" fill="#782a14"/>
<path d="M250 321C257.0 320.7,278.2 319.2,292.0 319.0C305.8 318.8,319.3 318.2,333.0 320.0C346.7 321.8,361.3 326.2,374.0 330.0C386.7 333.8,403.2 340.8,409.0 343.0C408.2 347.8,400.8 364.6,404.0 372.0C407.2 379.4,417.0 386.9,428.0 387.7C439.0 388.4,456.0 380.0,470.0 376.5C484.0 373.0,497.9 368.0,512.0 366.6C526.1 365.2,541.6 366.1,554.6 368.0C567.6 369.9,584.1 376.3,590.0 378.0L640 440 L600 470 L250 420 Z" fill="#782a14"/>
<path d="M273 333C279.5 333.2,298.6 332.7,312.0 334.0C325.4 335.3,340.5 336.8,353.6 341.0C366.7 345.2,384.5 356.0,390.7 359.0L390.7 359C390.0 360.3,392.7 368.1,386.5 367.0C380.3 365.9,366.0 356.4,353.6 352.7C341.2 348.9,324.8 346.6,312.0 344.5C299.2 342.4,282.8 340.8,277.0 340.0Z" fill="#963f1a"/>
<path d="M278 354 C270 325,245 296,205 292 C160 290,118 325,108 372 C100 415,125 458,172 478 L200 440 L250 400 Z" fill="#e0801e" stroke="#b86a14" stroke-width="1"/>
<path d="M278 354 C270 326,246 299,207 296 C168 294,131 327,121.5 372 C115 410,138 448,177 468 L200 440 L250 400 Z" fill="#f59a30"/>
<path d="M278 354 C272 332,258 312,236 302 C256 316,268 334,273 356 Z" fill="#fbc068"/>
<path d="M252 368 C240 345,218 333,194 334 C160 337,135 368,137 400 C139 426,155 449,180 460 L196 440 L250 380 Z" fill="#481a09"/>
<path d="M237 383 C231 363,215 352,197 352 C172 354,156 378,158 402 C160 421,175 437,193 443 L215 420 Z" fill="#ee7e7a"/>
<path d="M232 393 C228 377,214 365,196 362.5 C178 362,160 380,158.5 402 C160 421,175 437,193 443 L215 420 Z" fill="#f2a09a"/>
<path d="M562 390 C570 350,610 308,656 307 C700 306,745 350,764 403 C772 430,768 455,756 470 C742 495,722 512,700 524 L640 470 L600 400 Z" fill="#e0801e" stroke="#b86a14" stroke-width="1"/>
<path d="M562 390 C570 352,610 311,655 310 C695 309,733 350,748 400 C756 428,752 452,740 468 C728 488,712 504,692 518 L640 470 L600 400 Z" fill="#f59a30"/>
<path d="M564 384 C574 350,604 320,640 311 C610 324,584 350,570 386 Z" fill="#fbc068"/>
<path d="M600 396 C612 370,635 353,660 353 C690 353,720 375,732 404 C742 430,738 458,722 480 C712 493,700 502,688 506 L650 470 L612 410 Z" fill="#481a09"/>
<path d="M617 408 C628 390,652 379,676 380 C698 382,711 400,710 421 C710 445,696 466,668 480 L640 450 Z" fill="#ee7e7a"/>
<path d="M630 415 C640 404,656 397.5,676 398 C694 399.5,708 408,709.5 424 C710 446,696 466,668 480 L640 450 Z" fill="#f2a09a"/>
<path d="M165.7 522 C168 505,171 490,174 475 C178 462,186 450,202 431 C207 424,211 418,214 414 C208 414,202 413,196 411.5 C212 392,238 372,268 361 C280 356,290 354,300 353C330 358,370 362,409 366 C450 374,500 382,540 386C544.7 386.6,558.7 387.2,568.0 389.7C577.3 392.2,586.7 395.6,596.0 401.0C605.3 406.4,614.7 415.2,624.0 422.0C633.3 428.8,644.0 436.9,652.0 441.6C660.0 446.3,666.5 448.5,672.0 450.0C677.5 451.5,682.8 450.4,685.0 450.5C680 458,670 466,658 471 C668 482,680 496,692 522 Z" fill="#782a14"/>
<g fill="#963f1a">
<path d="M197 411C200.2 408.0,208.8 399.0,216.0 393.0C223.2 387.0,231.3 380.2,240.0 375.0C248.7 369.8,258.0 365.2,268.0 361.5C278.0 357.8,294.7 354.4,300.0 353.0L300 353C296.0 356.5,284.0 368.2,276.0 374.0C268.0 379.8,259.7 383.3,252.0 388.0C244.3 392.7,236.7 398.2,230.0 402.0C223.3 405.8,217.5 409.5,212.0 411.0C206.5 412.5,199.5 411.0,197.0 411.0Z"/>
<path d="M268.6 405.8C273.0 405.6,286.1 406.2,294.8 404.7C303.5 403.2,310.1 399.9,321.0 396.8C331.9 393.8,349.0 388.6,360.4 386.4C371.8 384.2,381.8 383.2,389.2 383.7C396.6 384.2,402.4 388.5,405.0 389.5L405 389.5C402.4 390.7,396.6 394.1,389.2 396.8C381.8 399.6,371.8 403.1,360.4 406.0C349.0 408.9,331.9 412.4,321.0 413.9C310.1 415.4,303.5 416.5,294.8 415.2C286.1 413.9,273.0 407.4,268.6 405.8Z"/>
<path d="M336.8 422.5C342.9 421.7,363.0 419.7,373.5 417.8C384.0 415.9,390.9 411.6,399.7 411.3C408.4 411.0,421.6 415.1,426.0 415.8L426 415.8C421.6 417.4,408.4 423.6,399.7 425.7C390.9 427.8,384.0 428.8,373.5 428.3C363.0 427.8,342.9 423.5,336.8 422.5Z"/>
<path d="M409 400 C420 392,445 386,470 388 C490 390,500 396,506 402 C480 398,455 402,443 417 C432 408,420 403,409 400 Z"/>
<path d="M197 470C198.7 467.2,202.5 460.0,207.0 453.0C211.5 446.0,217.5 436.1,224.0 428.0C230.5 419.9,242.3 408.5,246.0 404.6L246 404.6C243.7 408.8,237.0 422.1,232.0 430.0C227.0 437.9,220.5 445.0,216.0 452.0C211.5 459.0,206.8 468.7,205.0 472.0Z"/>
<path d="M174 476C175.3 473.3,179.0 465.0,182.0 460.0C185.0 455.0,188.3 450.7,192.0 446.0C195.7 441.3,200.0 436.3,204.0 432.0C208.0 427.7,214.0 422.0,216.0 420.0L216 420C213.7 424.0,206.3 437.3,202.0 444.0C197.7 450.7,193.7 454.3,190.0 460.0C186.3 465.7,182.8 471.3,180.0 478.0C177.2 484.7,174.2 496.3,173.0 500.0Z"/>
<path d="M202 496C203.2 491.7,206.2 478.2,209.5 470.0C212.8 461.8,217.6 453.8,222.0 447.0C226.4 440.2,233.7 432.0,236.0 429.0L236 429C234.3 432.8,229.3 444.5,226.0 452.0C222.7 459.5,218.8 466.3,216.0 474.0C213.2 481.7,210.2 494.0,209.0 498.0Z"/>
<path d="M180 522C180.7 519.2,182.3 510.3,184.0 505.0C185.7 499.7,187.8 494.5,190.0 490.0C192.2 485.5,195.8 480.0,197.0 478.0L197 478C196.8 480.3,196.7 487.2,196.0 492.0C195.3 496.8,194.0 502.0,193.0 507.0C192.0 512.0,190.5 519.5,190.0 522.0Z"/>
<path d="M198 522C198.3 520.0,199.0 513.7,200.0 510.0C201.0 506.3,203.3 501.7,204.0 500.0L204 500C204.3 502.0,205.7 508.3,206.0 512.0C206.3 515.7,206.0 520.3,206.0 522.0Z"/>
<path d="M540 386C544.7 386.6,558.7 387.2,568.0 389.7C577.3 392.2,586.7 395.6,596.0 401.0C605.3 406.4,614.7 415.2,624.0 422.0C633.3 428.8,644.0 436.9,652.0 441.6C660.0 446.3,666.5 448.5,672.0 450.0C677.5 451.5,682.8 450.4,685.0 450.5L685 450.5C682.5 451.6,675.8 456.6,670.0 457.0C664.2 457.4,658.0 456.5,650.0 453.0C642.0 449.5,631.7 442.8,622.0 436.0C612.3 429.2,601.3 418.5,592.0 412.0C582.7 405.5,574.7 401.3,566.0 397.0C557.3 392.7,544.3 387.8,540.0 386.0Z"/>
<path d="M546 404C550.3 405.3,563.7 408.0,572.0 412.0C580.3 416.0,587.7 421.7,596.0 428.0C604.3 434.3,613.3 443.3,622.0 450.0C630.7 456.7,641.7 464.5,648.0 468.0C654.3 471.5,658.0 470.5,660.0 471.0L660 471C656.3 472.2,645.3 479.5,638.0 478.0C630.7 476.5,624.0 468.7,616.0 462.0C608.0 455.3,598.3 445.3,590.0 438.0C581.7 430.7,573.3 423.7,566.0 418.0C558.7 412.3,549.3 406.3,546.0 404.0Z"/>
<path d="M560 432C563.7 434.3,574.7 440.3,582.0 446.0C589.3 451.7,596.7 458.7,604.0 466.0C611.3 473.3,619.3 480.7,626.0 490.0C632.7 499.3,641.0 516.7,644.0 522.0L626 522C624.0 518.0,619.0 506.0,614.0 498.0C609.0 490.0,602.3 481.7,596.0 474.0C589.7 466.3,582.0 459.0,576.0 452.0C570.0 445.0,562.7 435.3,560.0 432.0Z"/>
<path d="M578 468C580.3 470.3,587.7 476.7,592.0 482.0C596.3 487.3,600.7 493.3,604.0 500.0C607.3 506.7,610.7 518.3,612.0 522.0L599 522C598.2 519.3,596.2 511.7,594.0 506.0C591.8 500.3,588.7 494.3,586.0 488.0C583.3 481.7,579.3 471.3,578.0 468.0Z"/>
<path d="M640 474C642.7 476.7,651.3 484.7,656.0 490.0C660.7 495.3,664.7 500.7,668.0 506.0C671.3 511.3,674.7 519.3,676.0 522.0L662 522C661.3 520.0,660.0 514.7,658.0 510.0C656.0 505.3,653.0 500.0,650.0 494.0C647.0 488.0,641.7 477.3,640.0 474.0Z"/>
<path d="M506 392C508.3 392.3,515.3 392.7,520.0 394.0C524.7 395.3,529.7 397.3,534.0 400.0C538.3 402.7,544.0 408.3,546.0 410.0L546 410C543.3 409.3,534.7 407.8,530.0 406.0C525.3 404.2,522.0 401.3,518.0 399.0C514.0 396.7,508.0 393.2,506.0 392.0Z"/>
</g>
<path d="M208 522C209.0 517.0,211.5 500.7,214.0 492.0C216.5 483.3,219.2 476.8,223.0 470.0C226.8 463.2,231.7 456.7,237.0 451.0C242.3 445.3,248.7 439.9,255.0 436.0C261.3 432.1,268.3 429.3,275.0 427.5C281.7 425.7,287.8 425.1,295.0 425.0C302.2 424.9,310.5 425.2,318.0 427.0C325.5 428.8,333.3 432.2,340.0 436.0C346.7 439.8,353.0 445.7,358.0 450.0C363.0 454.3,366.7 458.2,370.0 462.0C373.3 465.8,376.7 471.2,378.0 473.0C379.7 470.0,383.9 460.4,388.0 455.0C392.1 449.6,396.3 445.4,402.5 440.4C408.7 435.3,417.5 428.8,425.0 424.7C432.5 420.6,439.9 417.8,447.4 415.7C454.9 413.6,462.5 412.8,470.0 412.4C477.5 412.0,484.9 412.4,492.4 413.5C499.9 414.6,507.3 416.0,514.8 419.0C522.3 422.0,529.8 426.1,537.3 431.5C544.8 436.9,553.4 444.6,559.8 451.7C566.2 458.8,571.0 465.8,575.5 474.0C580.0 482.2,584.0 493.0,586.7 501.0C589.5 509.0,591.1 518.5,592.0 522.0Z" fill="#e0801e" stroke="#b46a16" stroke-width="1"/>
<path d="M213.5 522C214.4 517.3,216.6 502.2,219.0 494.0C221.4 485.8,224.3 479.3,228.0 473.0C231.7 466.7,236.0 461.2,241.0 456.0C246.0 450.8,252.2 445.3,258.0 441.5C263.8 437.7,269.8 434.8,276.0 433.0C282.2 431.2,288.2 430.6,295.0 430.5C301.8 430.4,309.8 430.8,317.0 432.5C324.2 434.2,331.7 437.4,338.0 441.0C344.3 444.6,350.0 449.5,355.0 454.0C360.0 458.5,364.2 463.3,368.0 468.0C371.8 472.7,376.3 479.7,378.0 482.0C379.7 479.3,383.9 471.1,388.0 466.0C392.1 460.9,396.3 456.5,402.5 451.7C408.7 446.9,417.5 440.8,425.0 437.0C432.5 433.2,438.1 430.8,447.4 429.0C456.7 427.2,469.8 426.1,481.0 426.5C492.2 426.9,505.4 428.4,514.8 431.5C524.2 434.6,530.5 439.4,537.3 445.0C544.0 450.6,550.4 457.5,555.3 465.0C560.2 472.5,563.7 480.5,566.5 490.0C569.3 499.5,571.1 516.7,572.0 522.0Z" fill="#f59a30"/>
<path d="M244.5 492.5C246.2 489.2,249.9 478.0,255.0 473.0C260.1 468.0,268.8 464.1,275.0 462.5C281.2 460.9,287.0 462.2,292.0 463.5C297.0 464.8,302.8 469.3,305.0 470.5L305 470.5C302.7 470.5,295.7 470.0,291.0 470.5C286.3 471.0,282.2 471.8,277.0 473.5C271.8 475.2,265.4 477.3,260.0 480.5C254.6 483.7,247.1 490.5,244.5 492.5Z" fill="#0c0806"/>
<path d="M465 480C467.2 478.2,473.4 471.9,478.0 469.5C482.6 467.1,487.4 465.5,492.4 465.6C497.4 465.7,503.4 467.3,508.0 470.0C512.6 472.7,516.8 477.1,520.0 482.0C523.2 486.9,526.2 496.6,527.5 499.5L527.5 499.5C526.1 497.9,522.9 493.4,519.3 489.9C515.7 486.4,511.4 481.1,505.8 478.7C500.2 476.3,492.4 475.1,485.6 475.3C478.8 475.5,468.4 479.2,465.0 480.0Z" fill="#0c0806"/>
<path d="M236 381 C231 363,215 352,197 352 C172 354,156 378,158 402 C160 421,175 437,194 434 C212 428,232 408,236 381 Z" fill="none" stroke="#8f8fd8" stroke-width="0.7"/>
<g fill="#c8c8f0" stroke="#7a7acc" stroke-width="0.6"><circle cx="165" cy="369" r="1.4"/><circle cx="226" cy="385" r="1.6"/><circle cx="235" cy="381" r="1.2"/><circle cx="194" cy="433" r="1.4"/></g>
</g></svg>
<!--L-END-->
<div id="vscroll" class="abs"></div>
<div class="b" style="left:796px;top:281px;width:12px;height:11px;background:#a2a2a2"></div>
<div class="b tri-u" style="left:799px;top:72px;border-bottom-color:#d8d8d8"></div>
<div class="b tri-l" style="left:798px;top:511px;border-right-color:#bbb;border-top-width:2.5px;border-bottom-width:2.5px;border-right-width:3px"></div>
<div id="status" class="abs"></div>
<div class="b" style="left:430px;top:520px;width:366px;height:14px;background:#363636"></div>
<div class="b" style="left:796px;top:520px;width:13px;height:14px;background:#303030"></div>
<svg class="abs" style="left:62px;top:523px" width="14" height="8" viewBox="0 0 14 8"><rect x="0.5" y="0.5" width="13" height="7" rx="2" fill="none" stroke="#666"/><circle cx="5" cy="4" r="1.6" fill="none" stroke="#666"/><path d="M8.5 3 L11 4.5" stroke="#666"/></svg>
<svg class="abs" style="left:84px;top:522px" width="12" height="10" viewBox="0 0 12 10"><path d="M3.5 1.5 H1 V9 H9.5 V6.5" stroke="#d8d8d8" stroke-width="1.3" fill="none"/><path d="M4 7 C4 4,6 2.8,8 2.8 V0.8 L11.5 3.8 L8 6.8 V4.8 C6.5 4.8,5 5.3,4 7 Z" fill="#d8d8d8"/></svg>
<div class="b inp" style="left:103.5px;top:521px;width:33px;height:12px;background:#aaa;border-color:#333"></div>
<div class="t" style="left:105px;top:521px;color:#222;font-size:9.2px;font-family:'Liberation Mono',monospace;letter-spacing:-0.4px">364.65</div>
<div class="b dd" style="left:136.5px;top:521px;width:11px;height:12px"></div><div class="b tri-d" style="left:139px;top:525px"></div>
<svg class="abs" style="left:154px;top:523px" width="100" height="8" viewBox="0 0 100 8"><path d="M1.5 1 V7 M7 1 L3 4 L7 7 Z M20 1 L16 4 L20 7 Z M81.5 1 L85.5 4 L81.5 7 Z M92.5 1 L96.5 4 L92.5 7 Z M98 1 V7" fill="#6a6a6a" stroke="#6a6a6a" stroke-width="0.8"/></svg>
<div class="b inp" style="left:182px;top:521px;width:32px;height:12px;background:#aaa;border-color:#333"></div>
<div class="t" style="left:185px;top:521px;color:#222;font-size:9.5px">1</div>
<div class="b dd" style="left:214px;top:521px;width:11px;height:12px"></div><div class="b tri-d" style="left:216.5px;top:525px"></div>
<div class="t serif" style="left:320px;top:522px;font-size:9px;color:#e8e8e8;line-height:11px">直接选择</div>
<div class="b tri-r" style="left:421px;top:524px"></div>
<div class="b" style="left:428.5px;top:520px;width:1.5px;height:14px;background:#2a2a2a"></div>
<div class="b tri-l" style="left:434px;top:523.5px"></div>
<div class="b" style="left:605.5px;top:521px;width:12px;height:12px;background:#a2a2a2"></div>
<div class="b tri-r" style="left:785px;top:523.5px"></div>
<!--R-START-->
<div id="right" class="abs"></div>
<div class="b" style="left:809px;top:51px;width:189px;height:11.5px;background:#363636;border-top:1px solid #2a2a2a"></div>
<div class="b tri-r" style="left:988px;top:54px;border-left-width:3px;border-top-width:2.5px;border-bottom-width:2.5px;border-left-color:#ccc"></div><div class="b tri-r" style="left:991.5px;top:54px;border-left-width:3px;border-top-width:2.5px;border-bottom-width:2.5px;border-left-color:#ccc"></div>
<div class="b" style="left:809px;top:62.5px;width:189px;height:13.5px;background:#3d3d3d;border-bottom:1px solid #333"></div>
<div class="b" style="left:809px;top:62.5px;width:35px;height:14px;background:#4a4a4a;border-right:1px solid #303030"></div>
<svg class="abs" style="left:812px;top:65px" width="5" height="9" viewBox="0 0 5 9"><path d="M0.5 3.5 L2.5 0.8 L4.5 3.5 M0.5 5.5 L2.5 8.2 L4.5 5.5" stroke="#ddd" fill="none" stroke-width="1"/></svg>
<div class="t pt" style="left:819.5px;top:64px;color:#f0f0f0;font-weight:700">颜色</div>
<div class="t pt" style="left:850px;top:64px">颜色参考</div>
<div class="t pt" style="left:899px;top:64px">描边</div>
<div class="t pt" style="left:930px;top:64px">渐变</div>
<svg class="abs" style="left:983px;top:66px" width="11" height="7" viewBox="0 0 11 7"><path d="M0 1.5 L3.4 1.5 L1.7 3.8 Z" fill="#ddd"/><path d="M4.5 1 H11 M4.5 3.5 H11 M4.5 6 H11" stroke="#ddd" stroke-width="1"/></svg>
<svg class="abs" style="left:809px;top:76px" width="189" height="170" viewBox="809 76 189 170">
<defs>
<linearGradient id="sc"><stop offset="0" stop-color="#ec7470"/><stop offset="1" stop-color="#1d4a7c"/></linearGradient>
<linearGradient id="sm"><stop offset="0" stop-color="#f6ea7c"/><stop offset="1" stop-color="#e22e5c"/></linearGradient>
<linearGradient id="sy"><stop offset="0" stop-color="#e26eb0"/><stop offset="1" stop-color="#f18c1e"/></linearGradient>
<linearGradient id="sk"><stop offset="0" stop-color="#ec7470"/><stop offset="1" stop-color="#0a0a0a"/></linearGradient>
<linearGradient id="hue" x1="0" y1="0" x2="1" y2="0">
<stop offset="0" stop-color="#ff1a1a"/><stop offset="0.08" stop-color="#ff8c00"/><stop offset="0.17" stop-color="#f4f400"/><stop offset="0.3" stop-color="#2fb52f"/><stop offset="0.42" stop-color="#14a58c"/><stop offset="0.52" stop-color="#1aa6d8"/><stop offset="0.62" stop-color="#2040b8"/><stop offset="0.7" stop-color="#2a1a9a"/><stop offset="0.78" stop-color="#a01aa0"/><stop offset="0.86" stop-color="#ee1090"/><stop offset="0.95" stop-color="#f0103c"/><stop offset="1" stop-color="#ee1a1a"/></linearGradient>
<linearGradient id="wk" x1="0" y1="0" x2="0" y2="1"><stop offset="0" stop-color="#fff" stop-opacity="1"/><stop offset="0.42" stop-color="#fff" stop-opacity="0"/><stop offset="0.5" stop-color="#000" stop-opacity="0"/><stop offset="1" stop-color="#000" stop-opacity="1"/></linearGradient>
</defs>
<rect x="816" y="82.5" width="5" height="5" fill="#fff" stroke="#222" stroke-width="0.8"/><rect x="818.5" y="85" width="5" height="5" fill="#222" stroke="#eee" stroke-width="0.8"/>
<path d="M832 82.5 L830.3 84.7 L832 87 M830.5 84.7 H834.5 V88 M836 91 L837.7 88.8 L836 86.5" stroke="#cfcfcf" stroke-width="1.2" fill="none"/>
<rect x="822.5" y="102.5" width="14.5" height="14.5" fill="#fff" stroke="#2c2c2c"/>
<rect x="826.5" y="106.5" width="6.5" height="6.5" fill="#7a3838" stroke="#2c2c2c" stroke-width="0.8"/>
<path d="M823.5 116 L836 103.5" stroke="#d8262c" stroke-width="1.3"/>
<rect x="814.5" y="96" width="14.5" height="14.5" fill="#f27572" stroke="#dcc4c4" stroke-width="0.9"/>
<path d="M823 131 L827.5 133 V138 L823 140 L818.5 138 V133 Z M818.5 133 L823 135 L827.5 133 M823 135 V140" fill="none" stroke="#bdbdbd" stroke-width="1"/>
<rect x="833" y="129" width="11" height="11" fill="#f27572" stroke="#2c2c2c" stroke-width="0.8"/>
<g font-family="Liberation Serif,serif" font-weight="700" font-size="10" fill="#e0e0e0"><text x="851" y="94.5" textLength="5" lengthAdjust="spacingAndGlyphs">C</text><text x="851" y="113" textLength="5.5" lengthAdjust="spacingAndGlyphs">M</text><text x="851" y="133.5" textLength="5" lengthAdjust="spacingAndGlyphs">Y</text><text x="851" y="153.5" textLength="5" lengthAdjust="spacingAndGlyphs">K</text></g>
<rect x="865.5" y="88.5" width="79" height="3.6" fill="url(#sc)"/>
<rect x="865.5" y="107.5" width="79" height="3.6" fill="url(#sm)"/>
<rect x="865.5" y="127" width="79" height="3.6" fill="url(#sy)"/>
<rect x="865.5" y="146.5" width="79" height="3.6" fill="url(#sk)"/>
<g fill="#e6e6e6" stroke="#222" stroke-width="0.7">
<path d="M869 93 L872 97.5 H866 Z"/><path d="M906 112 L909 116.5 H903 Z"/><path d="M893 131.5 L896 136 H890 Z"/><path d="M865.5 151 L868.5 155.5 H862.5 Z"/></g>
<g fill="#bdbdbd" stroke="#333" stroke-width="0.8"><rect x="951" y="84.5" width="25" height="12.5"/><rect x="951" y="103.5" width="25" height="12.5"/><rect x="951" y="123" width="25" height="12.5"/><rect x="951" y="142.5" width="25" height="12.5"/></g>
<g font-family="Liberation Mono,monospace" font-size="9.2" fill="#2a2a2a"><text x="953.5" y="94" textLength="19.5" lengthAdjust="spacingAndGlyphs">4.54</text><text x="952.5" y="113" textLength="24.5" lengthAdjust="spacingAndGlyphs">50.86</text><text x="952.5" y="132.5" textLength="24.5" lengthAdjust="spacingAndGlyphs">35.68</text><text x="953.5" y="152" textLength="19.5" lengthAdjust="spacingAndGlyphs">0.53</text></g>
<rect x="976.5" y="84" width="10" height="72" fill="#4a4a4a"/>
<g font-family="Liberation Sans,sans-serif" font-size="7" font-weight="700" fill="#e0e0e0"><text x="978" y="94">%</text><text x="978" y="113">%</text><text x="978" y="132.5">%</text><text x="978" y="152">%</text></g>
<rect x="814.5" y="166" width="10" height="10" fill="#fff"/><path d="M815 175.5 L824 166.5" stroke="#d8262c" stroke-width="1.2"/>
<rect x="824.5" y="166" width="10" height="10" fill="#000"/><rect x="834.5" y="166" width="10.5" height="10" fill="#fff"/>
<rect x="815.5" y="184" width="169" height="57" fill="url(#hue)"/>
<rect x="815.5" y="184" width="169" height="57" fill="url(#wk)"/>
</svg>
<div class="b" style="left:809px;top:244.5px;width:189px;height:4px;background:#333"></div>
<div class="b" style="left:809px;top:248.5px;width:189px;height:14px;background:#3d3d3d;border-bottom:1px solid #333"></div>
<div class="b" style="left:871.5px;top:248.5px;width:29.5px;height:14.5px;background:#4a4a4a;border-left:1px solid #303030;border-right:1px solid #303030"></div>
<div class="t pt" style="left:815.5px;top:250px">色板</div>
<div class="t pt" style="left:846px;top:250px">画笔</div>
<div class="t pt" style="left:876.5px;top:250px;color:#f0f0f0;font-weight:700">图层</div>
<div class="t pt" style="left:906.5px;top:250px">路径查找器</div>
<svg class="abs" style="left:983px;top:252px" width="11" height="7" viewBox="0 0 11 7"><path d="M0 1.5 L3.4 1.5 L1.7 3.8 Z" fill="#ddd"/><path d="M4.5 1 H11 M4.5 3.5 H11 M4.5 6 H11" stroke="#ddd" stroke-width="1"/></svg>
<svg class="abs" style="left:809px;top:263px" width="189" height="143.5" viewBox="809 263 189 143.5"><rect x="809" y="263" width="189" height="144" fill="#454545"/><rect x="813.5" y="267.5" width="170.5" height="140" fill="#525252"/><rect x="984" y="267.5" width="10.5" height="140" fill="#3c3c3c"/><rect x="848" y="267.5" width="3.6" height="140" fill="#4a6fc6"/><path d="M831 267.5 V407" stroke="#3e3e3e" stroke-width="1"/><path d="M847 267.5 V407" stroke="#3e3e3e" stroke-width="1"/><path d="M955.5 267.5 V407" stroke="#3e3e3e" stroke-width="1"/><path d="M984 267.5 V407" stroke="#3e3e3e" stroke-width="1"/><path d="M813.5 267.8 H984" stroke="#3c3c3c" stroke-width="1"/><path d="M813.5 284.2 H984" stroke="#3c3c3c" stroke-width="1"/><path d="M813.5 300.6 H984" stroke="#3c3c3c" stroke-width="1"/><path d="M813.5 317.0 H984" stroke="#3c3c3c" stroke-width="1"/><path d="M813.5 333.4 H984" stroke="#3c3c3c" stroke-width="1"/><path d="M813.5 349.8 H984" stroke="#3c3c3c" stroke-width="1"/><path d="M813.5 366.2 H984" stroke="#3c3c3c" stroke-width="1"/><path d="M813.5 382.6 H984" stroke="#3c3c3c" stroke-width="1"/><path d="M813.5 399.0 H984" stroke="#3c3c3c" stroke-width="1"/><path d="M813.5 415.4 H984" stroke="#3c3c3c" stroke-width="1"/><path d="M817 276.0 Q822 271.0 827 276.0 Q822 281.0 817 276.0 Z" fill="#d8d8d8"/><circle cx="822" cy="276.0" r="2.2" fill="#333"/><circle cx="821.3" cy="275.2" r="0.7" fill="#ddd"/><path d="M903 273.0 L908 276.0 L903 279.0 Z" fill="#e0e0e0"/><rect x="916" y="269.5" width="13.5" height="13" fill="#fbfbfb" stroke="#2c2c2c" stroke-width="0.8"/><ellipse cx="922.5" cy="276.0" rx="3" ry="4.5" fill="#fff" stroke="#222" stroke-width="0.9"/><circle cx="923" cy="277.5" r="1.6" fill="#123"/><circle cx="963.7" cy="276.0" r="3.2" fill="none" stroke="#cacaca" stroke-width="1.3"/><path d="M817 292.4 Q822 287.4 827 292.4 Q822 297.4 817 292.4 Z" fill="#d8d8d8"/><circle cx="822" cy="292.4" r="2.2" fill="#333"/><circle cx="821.3" cy="291.6" r="0.7" fill="#ddd"/><rect x="916" y="285.9" width="13.5" height="13" fill="#fbfbfb" stroke="#2c2c2c" stroke-width="0.8"/><path d="M918 293.4 Q922 289.4 927 292.4" stroke="#f3c6cc" stroke-width="2.5" fill="none"/><circle cx="963.7" cy="292.4" r="3.2" fill="none" stroke="#cacaca" stroke-width="1.3"/><path d="M817 308.8 Q822 303.8 827 308.8 Q822 313.8 817 308.8 Z" fill="#d8d8d8"/><circle cx="822" cy="308.8" r="2.2" fill="#333"/><circle cx="821.3" cy="308.0" r="0.7" fill="#ddd"/><rect x="916" y="302.3" width="13.5" height="13" fill="#fbfbfb" stroke="#2c2c2c" stroke-width="0.8"/><path d="M918 309.8 Q922 305.8 927 308.8" stroke="#f3c6cc" stroke-width="2.5" fill="none"/><circle cx="963.7" cy="308.8" r="3.2" fill="none" stroke="#cacaca" stroke-width="1.3"/><path d="M903 322.2 L908 325.2 L903 328.2 Z" fill="#e0e0e0"/><rect x="916" y="318.7" width="13.5" height="13" fill="#fbfbfb" stroke="#2c2c2c" stroke-width="0.8"/><path d="M915 325.2 Q918 319.2 925 321.2 Q930 325.2 927 330.2 Q921 327.2 915 325.2 Z" fill="#8a3a18"/><circle cx="963.7" cy="325.2" r="3.2" fill="none" stroke="#cacaca" stroke-width="1.3"/><path d="M903 338.6 L908 341.6 L903 344.6 Z" fill="#e0e0e0"/><rect x="916" y="335.1" width="13.5" height="13" fill="#fbfbfb" stroke="#2c2c2c" stroke-width="0.8"/><path d="M919 345.6 Q920 339.6 926 337.6" stroke="#d8d2c0" stroke-width="0.9" fill="none"/><circle cx="963.7" cy="341.6" r="3.2" fill="none" stroke="#cacaca" stroke-width="1.3"/><path d="M903 355.0 L908 358.0 L903 361.0 Z" fill="#e0e0e0"/><rect x="916" y="351.5" width="13.5" height="13" fill="#fbfbfb" stroke="#2c2c2c" stroke-width="0.8"/><path d="M919 362.0 Q920 356.0 926 354.0" stroke="#d8d2c0" stroke-width="0.9" fill="none"/><circle cx="963.7" cy="358.0" r="3.2" fill="none" stroke="#cacaca" stroke-width="1.3"/><path d="M903 371.4 L908 374.4 L903 377.4 Z" fill="#e0e0e0"/><rect x="916" y="367.9" width="13.5" height="13" fill="#fbfbfb" stroke="#2c2c2c" stroke-width="0.8"/><ellipse cx="922.5" cy="374.4" rx="5" ry="3.5" fill="#f3c28e"/><circle cx="963.7" cy="374.4" r="3.2" fill="none" stroke="#cacaca" stroke-width="1.3"/><path d="M903 387.8 L908 390.8 L903 393.8 Z" fill="#e0e0e0"/><rect x="916" y="384.3" width="13.5" height="13" fill="#fbfbfb" stroke="#2c2c2c" stroke-width="0.8"/><path d="M919 394.8 Q920 388.8 926 386.8" stroke="#d8d2c0" stroke-width="0.9" fill="none"/><circle cx="963.7" cy="390.8" r="3.2" fill="none" stroke="#cacaca" stroke-width="1.3"/><path d="M903 404.2 L908 407.2 L903 410.2 Z" fill="#e0e0e0"/><rect x="916" y="400.7" width="13.5" height="13" fill="#fbfbfb" stroke="#2c2c2c" stroke-width="0.8"/><path d="M919 411.2 Q920 405.2 926 403.2" stroke="#d8d2c0" stroke-width="0.9" fill="none"/><circle cx="963.7" cy="407.2" r="3.2" fill="none" stroke="#cacaca" stroke-width="1.3"/><path d="M986.5 276 L989.2 272 L992 276 Z" fill="#e0e0e0"/><rect x="985" y="287.5" width="8.5" height="9.5" fill="#9c9c9c"/></svg>
<div class="b" style="left:807px;top:406.5px;width:191px;height:127.5px;background:#484848;border-top:1px solid #3a3a3a;border-left:1px solid #3a3a3a"></div>
<!--R-END-->
</body>
</html>
